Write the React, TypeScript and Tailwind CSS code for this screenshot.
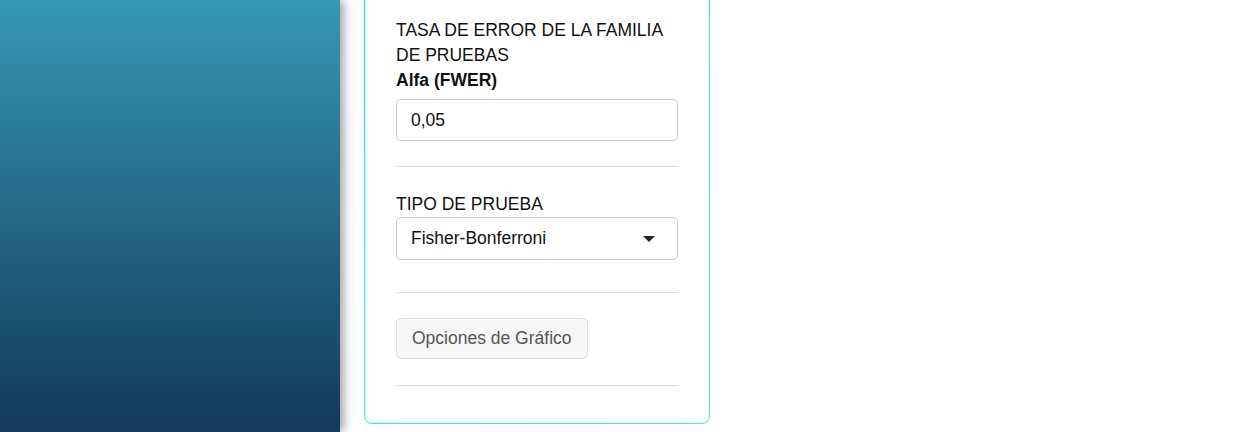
import { ReactNode } from "react";

function Divider() {
  return <div className="h-px w-full bg-[#dddddd]" />;
}

function Field({ children }: { children: ReactNode }) {
  return <div className="flex flex-col">{children}</div>;
}

export default function App() {
  return (
    <div
      className="flex h-[432px] w-full overflow-hidden bg-white text-[17.5px] text-[#111]"
      style={{ fontFamily: '"Liberation Sans", Arial, sans-serif' }}
    >
      <aside className="relative z-10 h-full w-[340px] shrink-0 bg-gradient-to-b from-[#3699b3] to-[#133a5a] shadow-[4px_0_9px_rgba(0,0,0,0.35)]" />

      <div className="ml-[24px] w-[346px] shrink-0 self-start rounded-b-[8px] bg-gradient-to-br from-[#00f2ec] to-[#3fefc6] px-px pb-px">
        <div className="flex flex-col rounded-b-[7px] bg-white px-[31px] pb-[37px] pt-[18px]">
          <Field>
            <div className="leading-[25px]">
              TASA DE ERROR DE LA FAMILIA
              <br />
              DE PRUEBAS
            </div>
            <label className="font-bold leading-[24px]">Alfa (FWER)</label>
            <input
              defaultValue="0,05"
              className="mt-[7px] h-[42px] w-full rounded-[5px] border border-[#cccccc] px-[14px] text-[17.5px] text-[#111] outline-none"
            />
          </Field>

          <div className="mb-[25px] mt-[25px]">
            <Divider />
          </div>

          <Field>
            <div className="leading-[24px]">TIPO DE PRUEBA</div>
            <div className="mt-px flex h-[43px] w-full items-center justify-between rounded-[5px] border border-[#cccccc] pl-[14px] pr-[22px]">
              <span>Fisher-Bonferroni</span>
              <svg width="12" height="6" viewBox="0 0 12 6" className="text-[#222]">
                <path d="M0 0 L12 0 L6 6 Z" fill="currentColor" />
              </svg>
            </div>
          </Field>

          <div className="mb-[25px] mt-[32px]">
            <Divider />
          </div>

          <div>
            <button className="h-[41px] rounded-[5px] border border-[#dcdcdc] bg-[#f6f6f6] px-[15px] text-[17.5px] text-[#555]">
              Opciones de Gráfico
            </button>
          </div>

          <div className="mt-[26px]">
            <Divider />
          </div>
        </div>
      </div>
    </div>
  );
}
